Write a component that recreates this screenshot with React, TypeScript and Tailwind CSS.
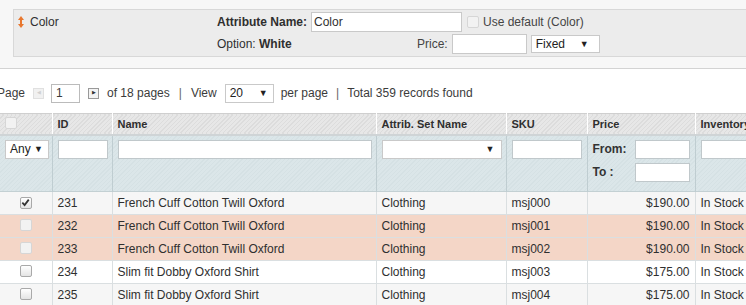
import React from 'react'

const font = { fontFamily: '"Liberation Sans", Arial, sans-serif' }

function Check({ checked = false, faded = false }: { checked?: boolean; faded?: boolean }) {
  return (
    <span
      className={`inline-flex items-center justify-center w-[12px] h-[12px] rounded-[2px] border ${
        faded ? 'border-[#d6d6d6] bg-[#f2f2f2]' : 'border-[#a9a9a9] bg-[linear-gradient(#ffffff,#e4e4e4)]'
      }`}
    >
      {checked && (
        <svg width="9" height="9" viewBox="0 0 10 10">
          <path d="M1.5 5.2 L4 7.8 L8.6 1.8" fill="none" stroke="#333" strokeWidth="2" />
        </svg>
      )}
    </span>
  )
}

function FakeSelect({ text, className }: { text: string; className: string }) {
  return (
    <div className={`flex items-center justify-between bg-white border border-[#c9c9c9] px-[4px] text-[12px] text-[#222] ${className}`}>
      <span>{text}</span>
      <span className="text-[9px] leading-none">▼</span>
    </div>
  )
}

const rows = [
  { id: 231, name: 'French Cuff Cotton Twill Oxford', sku: 'msj000', price: '$190.00', checked: true, hl: false, bg: 'bg-[#f6f6f6]' },
  { id: 232, name: 'French Cuff Cotton Twill Oxford', sku: 'msj001', price: '$190.00', checked: false, hl: true, bg: 'bg-[#f4d6c7]' },
  { id: 233, name: 'French Cuff Cotton Twill Oxford', sku: 'msj002', price: '$190.00', checked: false, hl: true, bg: 'bg-[#f4d6c7]' },
  { id: 234, name: 'Slim fit Dobby Oxford Shirt', sku: 'msj003', price: '$175.00', checked: false, hl: false, bg: 'bg-white' },
  { id: 235, name: 'Slim fit Dobby Oxford Shirt', sku: 'msj004', price: '$175.00', checked: false, hl: false, bg: 'bg-[#f6f6f6]' },
]

const headCell = 'h-[21px] px-[5px] text-left align-middle text-[11px] font-bold text-[#2f2f2f] border-r border-white whitespace-nowrap overflow-hidden'
const filterCell = 'align-top pt-[4px] px-[5px] border-r border-[#bfcdd1]'
const dataCell = 'h-[23px] px-[5px] align-middle border-r border-b border-[#dadfe1] text-[12px] text-[#2f2f2f] whitespace-nowrap'

export default function App() {
  return (
    <div className="w-[746px] h-[305px] overflow-hidden bg-white text-[12px] text-[#2f2f2f]" style={font}>
      {/* option panel */}
      <div className="h-[69px] bg-[#f7f7f7] border-b border-[#d3d3d3] pt-[9px] pl-[13px]">
        <div className="h-[48px] bg-[#ececec] border border-[#d8d8d8] border-r-0 flex">
          <div className="w-[203px] pl-[4px] pt-[5px] flex items-start gap-[6px]">
            <svg width="6" height="12" viewBox="0 0 6 12" className="mt-[1px]">
              <path d="M3 0 L6 4 L0 4 Z M3 12 L6 8 L0 8 Z" fill="#e8772e" />
              <rect x="2" y="3" width="2" height="6" fill="#e8772e" />
            </svg>
            <span className="leading-[15px]">Color</span>
          </div>
          <div className="flex flex-col pt-[2px] gap-[2px]">
            <div className="flex items-center h-[20px]">
              <span className="font-bold w-[94px]">Attribute Name:</span>
              <div className="w-[151px] h-[20px] bg-white border border-[#c9c9c9] px-[2px] flex items-center">Color</div>
              <span className="ml-[5px] flex"><Check faded /></span>
              <span className="ml-[4px] text-[#444]">Use default (Color)</span>
            </div>
            <div className="flex items-center h-[20px]">
              <span className="w-[200px]">
                Option: <span className="font-bold">White</span>
              </span>
              <span className="text-[#444]">Price:</span>
              <div className="ml-[4px] w-[75px] h-[20px] bg-white border border-[#c9c9c9]" />
              <FakeSelect text="Fixed" className="ml-[4px] w-[69px] h-[18px] pr-[10px]" />
            </div>
          </div>
        </div>
      </div>

      {/* pager */}
      <div className="h-[44px] flex items-center text-[#3b3b3b] pt-[4px]">
        <span className="ml-[-3px]">Page</span>
        <span className="ml-[8px] w-[11px] h-[11px] border border-[#e0e0e0] bg-[#f1f1f1] flex items-center justify-center">
          <span className="text-[5px] text-[#d0d0d0]">◀</span>
        </span>
        <div className="ml-[7px] w-[29px] h-[19px] border border-[#bbb] bg-white flex items-center pl-[4px]">1</div>
        <span className="ml-[8px] w-[11px] h-[11px] border border-[#999] bg-[#f3f3f3] flex items-center justify-center">
          <span className="text-[5px] text-[#333]">▶</span>
        </span>
        <span className="ml-[8px]">of 18 pages</span>
        <span className="ml-[9px] text-[#666]">|</span>
        <span className="ml-[9px]">View</span>
        <FakeSelect text="20" className="ml-[8px] w-[49px] h-[19px] pr-[5px]" />
        <span className="ml-[7px]">per page</span>
        <span className="ml-[8px] text-[#666]">|</span>
        <span className="ml-[8px]">Total 359 records found</span>
      </div>

      {/* grid */}
      <table className="table-fixed border-collapse w-[800px]">
        <colgroup>
          <col className="w-[52px]" />
          <col className="w-[60px]" />
          <col className="w-[264px]" />
          <col className="w-[130px]" />
          <col className="w-[81px]" />
          <col className="w-[108px]" />
          <col className="w-[105px]" />
        </colgroup>
        <thead>
          <tr className="bg-[repeating-linear-gradient(135deg,#e7e7e7_0px,#e7e7e7_2px,#dcdcdc_2px,#dcdcdc_3px)] border-t border-[#cfcfcf] border-b-2 border-b-[#cfd4d6]">
            <th className={`${headCell} text-center`}>
              <span className="inline-flex pt-[2px]"><Check faded /></span>
            </th>
            <th className={headCell}>ID</th>
            <th className={headCell}>Name</th>
            <th className={headCell}>Attrib. Set Name</th>
            <th className={headCell}>SKU</th>
            <th className={headCell}>Price</th>
            <th className={headCell}>Inventory</th>
          </tr>
        </thead>
        <tbody>
          <tr className="h-[57px] bg-[repeating-linear-gradient(135deg,#dbe6e9_0px,#dbe6e9_2px,#d5e1e4_2px,#d5e1e4_3px)] border-b border-[#c3d0d3]">
            <td className={`${filterCell} px-[4px]`}>
              <FakeSelect text="Any" className="w-[44px] h-[19px] pr-[5px]" />
            </td>
            <td className={filterCell}>
              <div className="w-[50px] h-[19px] bg-white border border-[#c0c8cb]" />
            </td>
            <td className={filterCell}>
              <div className="w-[254px] h-[19px] bg-white border border-[#c0c8cb]" />
            </td>
            <td className={filterCell}>
              <FakeSelect text="" className="w-[120px] h-[19px] pr-[6px]" />
            </td>
            <td className={filterCell}>
              <div className="w-[70px] h-[19px] bg-white border border-[#c0c8cb]" />
            </td>
            <td className={filterCell}>
              <div className="flex flex-col gap-[4px]">
                <div className="flex items-center justify-between">
                  <span className="font-bold text-[#333]">From:</span>
                  <div className="w-[55px] h-[19px] bg-white border border-[#c0c8cb]" />
                </div>
                <div className="flex items-center justify-between">
                  <span className="font-bold text-[#333]">To :</span>
                  <div className="w-[55px] h-[19px] bg-white border border-[#c0c8cb]" />
                </div>
              </div>
            </td>
            <td className={filterCell}>
              <div className="w-[90px] h-[19px] bg-white border border-[#c0c8cb]" />
            </td>
          </tr>
          {rows.map(r => (
            <tr key={r.id} className={r.bg}>
              <td className={`${dataCell} text-center`}>
                <span className="inline-flex pt-[2px]"><Check checked={r.checked} faded={r.hl} /></span>
              </td>
              <td className={dataCell}>{r.id}</td>
              <td className={dataCell}>{r.name}</td>
              <td className={dataCell}>Clothing</td>
              <td className={dataCell}>{r.sku}</td>
              <td className={`${dataCell} text-right`}>{r.price}</td>
              <td className={dataCell}>In Stock</td>
            </tr>
          ))}
        </tbody>
      </table>
    </div>
  )
}
